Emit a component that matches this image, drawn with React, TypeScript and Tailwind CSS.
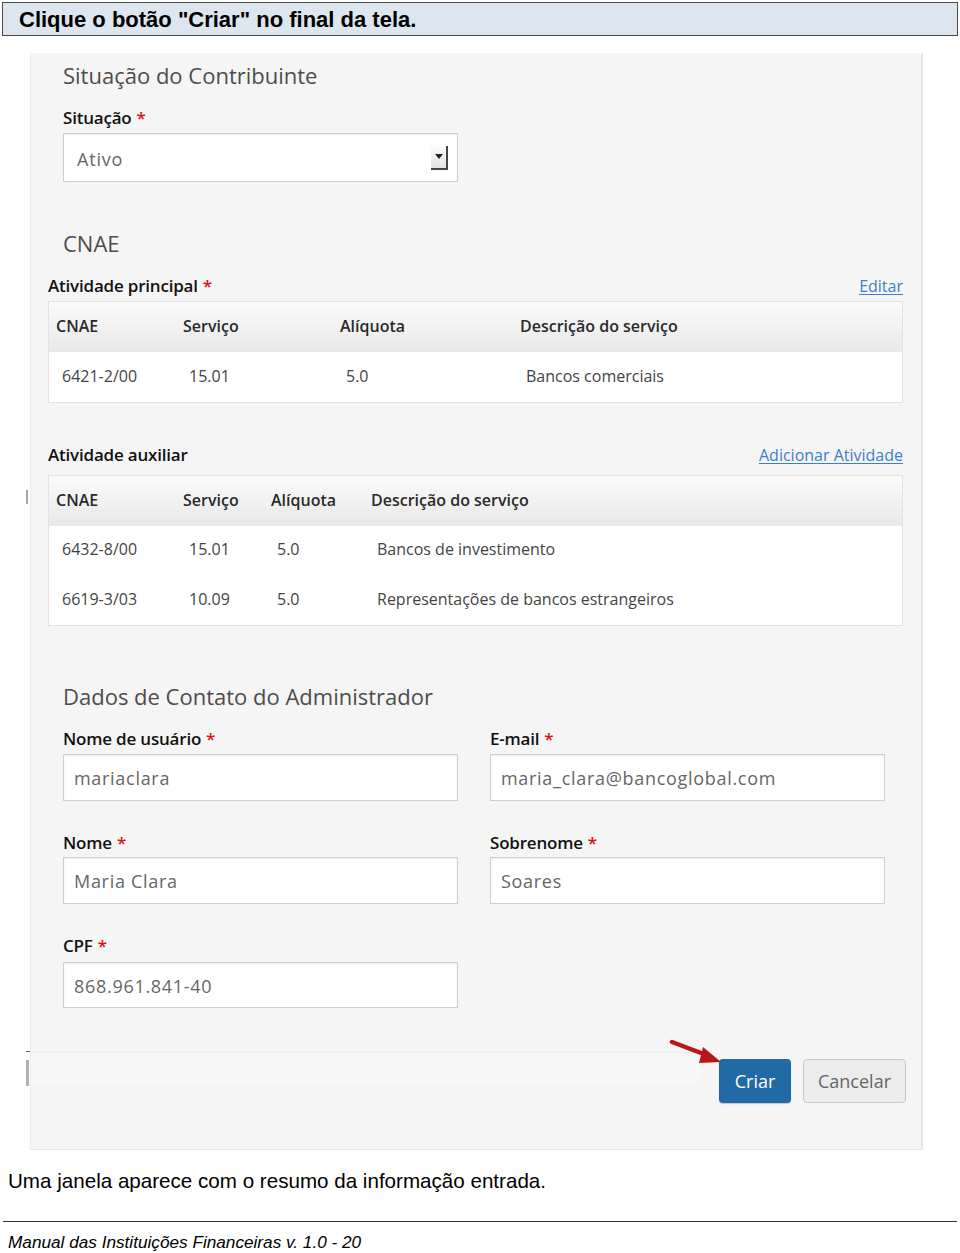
import React from "react";

const ui = { fontFamily: '"Open Sans", "DejaVu Sans", sans-serif' };
const arial = { fontFamily: '"Liberation Sans", Arial, sans-serif' };

function Req() {
  return <span className="text-[#e01010] ml-[5px]">*</span>;
}

function Label({ children, req = true }: { children: React.ReactNode; req?: boolean }) {
  return (
    <div className="text-[17px] leading-[24px] font-semibold text-[#111] tracking-[-0.2px]">
      {children}
      {req && <Req />}
    </div>
  );
}

function Input({ value, h = 47 }: { value: string; h?: number }) {
  return (
    <div
      className={`bg-white border border-[#cfcfcf] shadow-[inset_0_1px_2px_rgba(0,0,0,0.08)] flex items-center pl-[10px] pt-[2px] text-[18px] text-[#666] tracking-[0.7px] ${h === 47 ? "h-[47px]" : "h-[46px]"}`}
    >
      {value}
    </div>
  );
}

type Row = string[];

function Table({ cols, head, rows, rowHeights }: { cols: number[]; head: string[]; rows: Row[]; rowHeights: string[] }) {
  return (
    <div className="border border-[#e2e2e2] bg-white">
      <div className="h-[50px] flex items-center pb-[3px] bg-gradient-to-b from-[#fbfbfb] to-[#e8e8e8] text-[16px] font-semibold text-[#2a2a2a]">
        {head.map((h, i) => (
          <div key={i} className="shrink-0 pl-[7px]" style={{ width: cols[i] }}>
            {h}
          </div>
        ))}
      </div>
      {rows.map((r, ri) => (
        <div key={ri} className={`flex items-center pb-[3px] text-[16px] text-[#444] ${rowHeights[ri]}`}>
          {r.map((c, i) => (
            <div key={i} className="shrink-0 pl-[13px]" style={{ width: cols[i] }}>
              {c}
            </div>
          ))}
        </div>
      ))}
    </div>
  );
}

export default function App() {
  return (
    <div className="relative w-[960px] h-[1253px] bg-white overflow-hidden" style={arial}>
      {/* header instruction */}
      <div className="mx-[2px] mt-[2px] h-[34px] border border-[#4a4a4a] bg-[#dde5ef] flex items-center pl-[16px] text-[22px] font-bold text-black">
        Clique o botão "Criar" no final da tela.
      </div>

      {/* left scroll artifacts */}
      <div className="absolute left-[26px] top-[490px] w-[2px] h-[14px] bg-[#a8a8a8]" />
      <div className="absolute left-[26px] top-[1051px] w-[5px] h-[1px] bg-[#666]" />
      <div className="absolute left-[26px] top-[1060px] w-[3px] h-[26px] bg-[#b0b0b0]" />

      {/* screenshot panel */}
      <div
        className="relative ml-[30px] mt-[17px] w-[893px] h-[1097px] bg-[#f5f5f5] border-l border-[#ececec] border-r-2 border-r-[#e6e6e6] border-b border-b-[#e8e8e8] flex flex-col"
        style={ui}
      >
        {/* faint band */}
        <div className="absolute left-0 top-[999px] w-[670px] h-[33px] bg-[#f7f7f7] border-t border-[#eeeeee]" />

        <div className="ml-[32px] mt-[7px] text-[22px] leading-[30px] text-[#4d4d4d]">Situação do Contribuinte</div>
        <div className="ml-[32px] mt-[16px]">
          <Label>Situação</Label>
        </div>
        <div className="ml-[32px] mt-[3px] w-[395px] h-[49px] bg-white border border-[#cccccc] shadow-[inset_0_1px_2px_rgba(0,0,0,0.06)] flex items-center justify-between pl-[13px] pr-[9px]">
          <span className="text-[18px] text-[#666] tracking-[0.8px] pt-[4px]">Ativo</span>
          <div className="w-[17px] h-[24px] border-r-2 border-b-2 border-[#444] bg-gradient-to-b from-[#fdfdfd] to-[#e2e2e2] flex items-center justify-center">
            <svg width="8" height="5" viewBox="0 0 8 5">
              <path d="M0 0 L8 0 L4 5 Z" fill="#222" />
            </svg>
          </div>
        </div>

        <div className="ml-[32px] mt-[46px] text-[22px] leading-[30px] text-[#4d4d4d]">CNAE</div>

        <div className="ml-[17px] mr-[18px] mt-[16px] flex items-center justify-between">
          <Label>Atividade principal</Label>
          <a className="text-[16px] leading-[24px] text-[#3b7fc6] underline underline-offset-2">Editar</a>
        </div>
        <div className="ml-[17px] mr-[18px] mt-[3px]">
          <Table
            cols={[127, 157, 180, 380]}
            head={["CNAE", "Serviço", "Alíquota", "Descrição do serviço"]}
            rows={[["6421-2/00", "15.01", "5.0", "Bancos comerciais"]]}
            rowHeights={["h-[50px]"]}
          />
        </div>

        <div className="ml-[17px] mr-[18px] mt-[40px] flex items-center justify-between">
          <Label req={false}>Atividade auxiliar</Label>
          <a className="text-[16px] leading-[24px] text-[#3b7fc6] underline underline-offset-2">Adicionar Atividade</a>
        </div>
        <div className="ml-[17px] mr-[18px] mt-[8px]">
          <Table
            cols={[127, 88, 100, 529]}
            head={["CNAE", "Serviço", "Alíquota", "Descrição do serviço"]}
            rows={[
              ["6432-8/00", "15.01", "5.0", "Bancos de investimento"],
              ["6619-3/03", "10.09", "5.0", "Representações de bancos estrangeiros"],
            ]}
            rowHeights={["h-[49px]", "h-[50px]"]}
          />
        </div>

        <div className="ml-[32px] mt-[55px] text-[22px] leading-[30px] text-[#4d4d4d]">Dados de Contato do Administrador</div>

        <div className="ml-[32px] w-[822px] grid grid-cols-[395px_395px] gap-x-[32px]">
          <div className="mt-[16px]">
            <Label>Nome de usuário</Label>
            <div className="mt-[3px]">
              <Input value="mariaclara" />
            </div>
          </div>
          <div className="mt-[16px]">
            <Label>E-mail</Label>
            <div className="mt-[3px]">
              <Input value="maria_clara@bancoglobal.com" />
            </div>
          </div>
          <div className="mt-[30px]">
            <Label>Nome</Label>
            <div className="mt-[2px]">
              <Input value="Maria Clara" />
            </div>
          </div>
          <div className="mt-[30px]">
            <Label>Sobrenome</Label>
            <div className="mt-[2px]">
              <Input value="Soares" />
            </div>
          </div>
          <div className="mt-[30px]">
            <Label>CPF</Label>
            <div className="mt-[4px]">
              <Input value="868.961.841-40" h={46} />
            </div>
          </div>
        </div>

        <div className="relative mt-[51px] mr-[15px] flex justify-end gap-[12px]">
          <button className="w-[72px] h-[44px] rounded-[4px] bg-[#226aa6] text-white text-[18px] shadow-[0_1px_1px_rgba(0,0,0,0.2)]">
            Criar
          </button>
          <button className="w-[103px] h-[44px] rounded-[4px] bg-[#ececec] border border-[#c8c8c8] text-[#666] text-[18px]">
            Cancelar
          </button>
        </div>

        {/* red arrow */}
        <svg className="absolute left-[638px] top-[984px]" width="58" height="32" viewBox="0 0 58 32">
          <path d="M3 5 L40 19" stroke="#b8161b" strokeWidth="4.5" strokeLinecap="round" />
          <path d="M34 10 L52 25 L30 26 Z" fill="#b8161b" />
        </svg>
      </div>

      <div className="ml-[8px] mt-[19px] text-[20.6px] leading-[24px] text-black">
        Uma janela aparece com o resumo da informação entrada.
      </div>
      <div className="ml-[3px] mt-[28px] w-[954px] border-t border-[#333]" />
      <div className="ml-[8px] mt-[10px] text-[17.2px] leading-[20px] italic text-black">
        Manual das Instituições Financeiras v. 1.0 - 20
      </div>
    </div>
  );
}
